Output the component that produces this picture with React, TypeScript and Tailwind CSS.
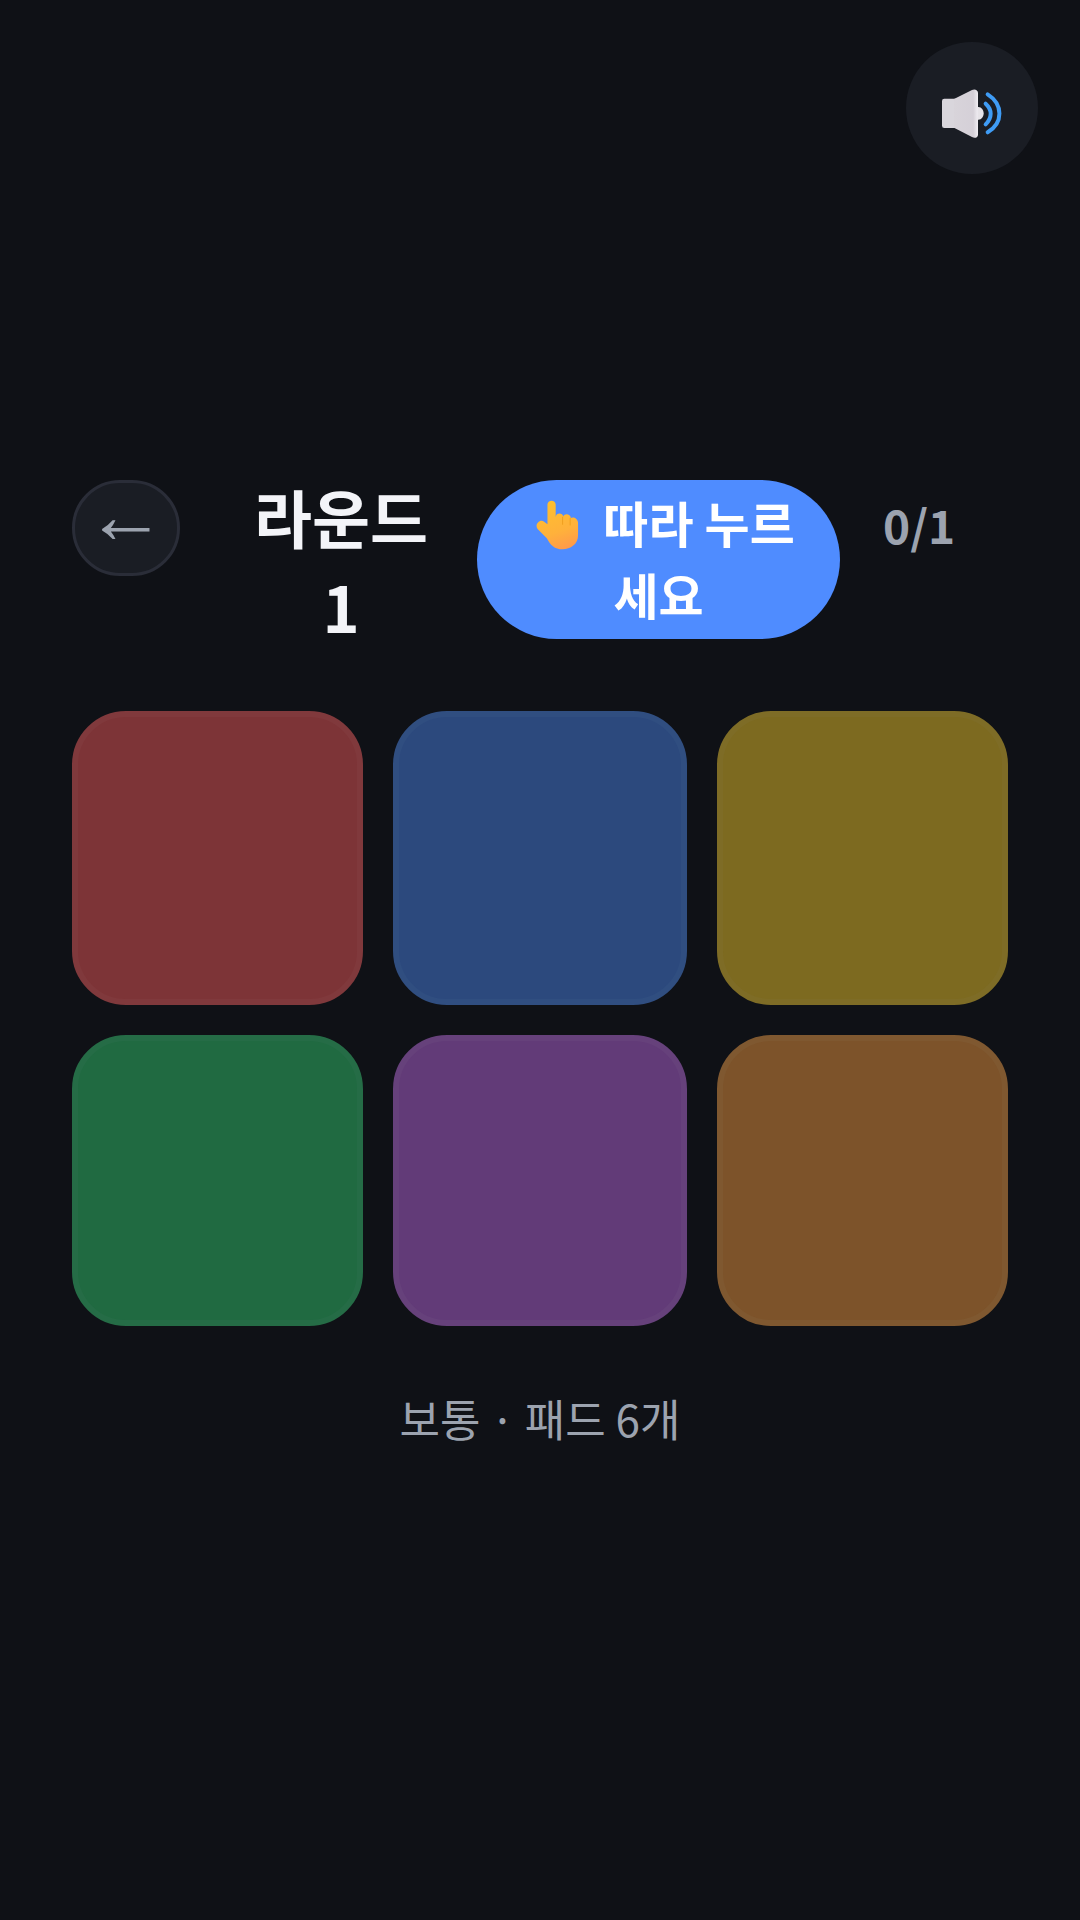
const pads = [
  "bg-[#7d3437] border-[#80393c]",
  "bg-[#2c497d] border-[#304e80]",
  "bg-[#7d6a20] border-[#7e6c26]",
  "bg-[#206a41] border-[#256c46]",
  "bg-[#623b78] border-[#66417b]",
  "bg-[#7d532a] border-[#7f5830]",
];

function SpeakerIcon() {
  return (
    <svg width="64" height="55" viewBox="180 205 192 165" fill="none">
      <defs>
        <linearGradient id="cone" x1="0" y1="0" x2="1" y2="0">
          <stop offset="0" stopColor="#d8d4da" />
          <stop offset="0.8" stopColor="#d5d0d8" />
          <stop offset="1" stopColor="#f1eef3" />
        </linearGradient>
      </defs>
      <rect x="186" y="237" width="48" height="88" rx="7" fill="#d9d6dc" />
      <path
        d="M222 238 L276 211 C284 207 294 211 294 220 L294 345 C294 354 284 357 276 352 L222 324 Z"
        fill="url(#cone)"
      />
      <path d="M293 262 C303 260 311 270 311 281 C311 292 303 302 293 300 Z" fill="#e6e3e8" />
      <path d="M317 252 C337 270 337 294 317 314" stroke="#3f9cf5" strokeWidth="12" strokeLinecap="round" />
      <path d="M323 224 C370 254 370 310 323 338" stroke="#3f9cf5" strokeWidth="12" strokeLinecap="round" />
    </svg>
  );
}

function HandIcon() {
  return (
    <svg
      width="46"
      height="50"
      viewBox="45 30 132 152"
      fill="none"
      className="inline-block align-[-7px] ml-[12px] mr-[12px]"
    >
      <defs>
        <linearGradient id="hand" x1="0.3" y1="0" x2="0.6" y2="1">
          <stop offset="0" stopColor="#ffc02e" />
          <stop offset="0.65" stopColor="#ffb13b" />
          <stop offset="1" stopColor="#ff9b4a" />
        </linearGradient>
      </defs>
      <path
        d="M82 44 C82 28 107 28 107 44 L107 82 C108 68 128 68 130 80 C134 70 152 72 153 85 C160 80 175 86 175 100 L175 138 C175 164 152 180 128 180 C104 180 90 166 80 146 L52 118 C42 106 58 86 72 96 L82 104 Z"
        fill="url(#hand)"
      />
      <path d="M128 82 L128 104 M151 86 L151 106" stroke="#f0a020" strokeWidth="3" strokeLinecap="round" />
    </svg>
  );
}

export default function App() {
  return (
    <div className="relative min-h-[1920px] bg-[#0f1116] flex flex-col justify-center pt-[1px] px-[72px] font-['Noto_Sans_CJK_KR','Noto_Sans',sans-serif]">
      <button className="absolute top-[42px] right-[42px] w-[132px] h-[132px] rounded-full bg-[#1a1d24] flex items-center justify-center pt-[14px]">
        <SpeakerIcon />
      </button>

      <div className="flex items-start">
        <button className="mt-[9px] w-[108px] h-[96px] shrink-0 rounded-full bg-[#1a1d24] border-[3px] border-[#2a2d38] text-[#9ca3af] text-[80px] leading-none pb-[24px] flex items-center justify-center font-['Liberation_Sans',sans-serif]">
          ←
        </button>
        <h1 className="ml-[25px] w-[272px] text-center text-[#f3f4f8] text-[63px] leading-[90px] font-bold px-[40px]">
          라운드 1
        </h1>
        <div className="mt-[9px] w-[363px] h-[159px] shrink-0 rounded-[80px] bg-[#4f8cff] text-white text-[49px] leading-[72px] font-bold text-center px-[40px] py-[6px]">
          <HandIcon /> 따라 누르세요
        </div>
        <div className="ml-[43px] mt-[17px] text-[#9ca3af] text-[46px] leading-[72px] font-bold">
          0/1
        </div>
      </div>

      <div className="mt-[60px] grid grid-cols-[291px_294px_291px] gap-[30px]">
        {pads.map((pad, i) => (
          <div
            key={i}
            className={`${pad} ${i < 3 ? "h-[294px]" : "h-[291px]"} rounded-[54px] border-[6px]`}
          />
        ))}
      </div>

      <p className="mt-[61px] text-center text-[#9ca3af] text-[44px] leading-[63px]">
        보통 · 패드 6개
      </p>
    </div>
  );
}
